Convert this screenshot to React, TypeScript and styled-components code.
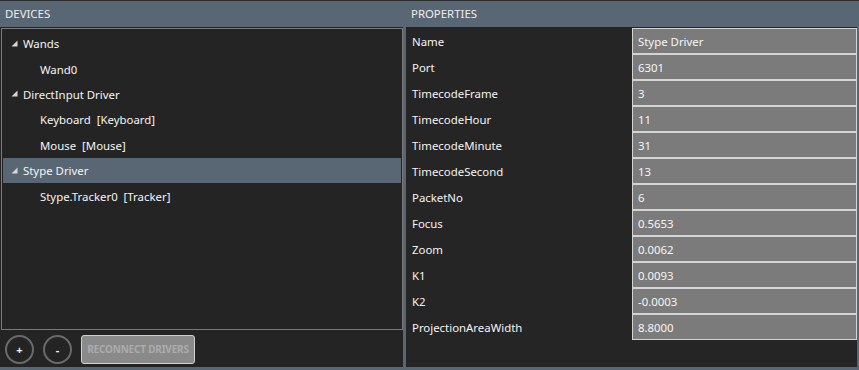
import React from "react";
import styled, { createGlobalStyle } from "styled-components";

interface TreeNode {
  label: string
  children?: string[]
  selected?: boolean
}

const devices: TreeNode[] = [
  { label: "Wands", children: ["Wand0"] },
  { label: "DirectInput Driver", children: ["Keyboard  [Keyboard]", "Mouse  [Mouse]"] },
  { label: "Stype Driver", children: ["Stype.Tracker0  [Tracker]"], selected: true },
];

const properties: [string, string][] = [
  ["Name", "Stype Driver"],
  ["Port", "6301"],
  ["TimecodeFrame", "3"],
  ["TimecodeHour", "11"],
  ["TimecodeMinute", "31"],
  ["TimecodeSecond", "13"],
  ["PacketNo", "6"],
  ["Focus", "0.5653"],
  ["Zoom", "0.0062"],
  ["K1", "0.0093"],
  ["K2", "-0.0003"],
  ["ProjectionAreaWidth", "8.8000"],
];

const GlobalStyle = createGlobalStyle`
  html, body {
    margin: 0;
    padding: 0;
    background: #252525;
  }
  body {
    font-family: "Noto Sans", "Open Sans", sans-serif;
    font-size: 11.4px;
    color: #f2f2f2;
  }
`;

const Expander = () => (
  <svg width="7" height="7" viewBox="0 0 7 7">
    <polygon points="6.5,0.5 6.5,6.5 0.5,6.5" fill="#d6d6d6" />
  </svg>
);

const App: React.FC = () => {
  return (
    <>
      <GlobalStyle />
      <Window>
        <Column>
          <Header>DEVICES</Header>
          <LeftBody>
            <TreeBox>
              {devices.map((node) => (
                <React.Fragment key={node.label}>
                  <TreeRow selected={node.selected}>
                    <Toggle>
                      <Expander />
                    </Toggle>
                    {node.label}
                  </TreeRow>
                  {node.children?.map((c) => (
                    <TreeRow key={c} child>
                      {c}
                    </TreeRow>
                  ))}
                </React.Fragment>
              ))}
            </TreeBox>
            <ButtonBar>
              <RoundButton>+</RoundButton>
              <RoundButton>-</RoundButton>
              <ReconnectButton disabled>RECONNECT DRIVERS</ReconnectButton>
            </ButtonBar>
          </LeftBody>
        </Column>
        <Column>
          <Header>PROPERTIES</Header>
          <RightBody>
            <PropGrid>
              {properties.map(([name, value]) => (
                <React.Fragment key={name}>
                  <PropName>{name}</PropName>
                  <PropValue>{value}</PropValue>
                </React.Fragment>
              ))}
            </PropGrid>
          </RightBody>
        </Column>
      </Window>
    </>
  );
};

const Window = styled.div`
  width: 859px;
  height: 370px;
  box-sizing: border-box;
  background: #596674;
  border-top: 1px solid #2c2c2c;
  padding: 0 2px 3px 0;
  display: grid;
  grid-template-columns: 403px 451px;
  column-gap: 3px;
`;

const Column = styled.div`
  display: flex;
  flex-direction: column;
  min-height: 0;
`;

const Header = styled.div`
  height: 26px;
  line-height: 26px;
  padding-left: 5px;
  font-size: 11.4px;
  color: #eeeeee;
  flex: none;
`;

const LeftBody = styled.div`
  flex: 1;
  background: #242424;
  display: flex;
  flex-direction: column;
  padding: 1px 0 0 1px;
`;

const TreeBox = styled.div`
  height: 302px;
  box-sizing: border-box;
  border: 1px solid #7a7a7a;
  padding: 2px 1px;
`;

const TreeRow = styled.div<{ selected?: boolean; child?: boolean }>`
  height: 25.4px;
  display: flex;
  align-items: center;
  padding-left: ${(p) => (p.child ? "37px" : "8px")};
  background: ${(p) => (p.selected ? "#596674" : "transparent")};
  color: #f4f4f4;
  white-space: pre;
`;

const Toggle = styled.span`
  display: inline-flex;
  width: 12px;
  margin-top: -1px;
`;

const ButtonBar = styled.div`
  display: flex;
  align-items: center;
  gap: 9px;
  padding: 4px 0 0 4px;
`;

const RoundButton = styled.button`
  width: 29px;
  height: 29px;
  border-radius: 50%;
  border: 2px solid #6a6a6a;
  background: transparent;
  color: #f0f0f0;
  font-family: "Noto Sans", sans-serif;
  font-size: 11px;
  font-weight: bold;
  padding: 0;
  margin-top: 1px;
`;

const ReconnectButton = styled.button`
  width: 114px;
  height: 29px;
  border: 1px solid #d0d0d0;
  border-radius: 3px;
  background: #8a8a8a;
  color: #acacac;
  font-family: "Noto Sans", sans-serif;
  font-size: 10px;
  font-weight: bold;
  padding: 0;
  white-space: nowrap;
  letter-spacing: -0.2px;
`;

const RightBody = styled.div`
  flex: 1;
  background: #252525;
  padding-top: 1px;
`;

const PropGrid = styled.div`
  display: grid;
  grid-template-columns: 226px 225px;
  grid-auto-rows: 26px;
`;

const PropName = styled.div`
  display: flex;
  align-items: center;
  padding-left: 6px;
  color: #f4f4f4;
`;

const PropValue = styled.div`
  display: flex;
  align-items: center;
  box-sizing: border-box;
  border: 1px solid #d4d4d4;
  background: #7b7b7b;
  padding-left: 5px;
  color: #f6f6f6;
`;

export default App;
